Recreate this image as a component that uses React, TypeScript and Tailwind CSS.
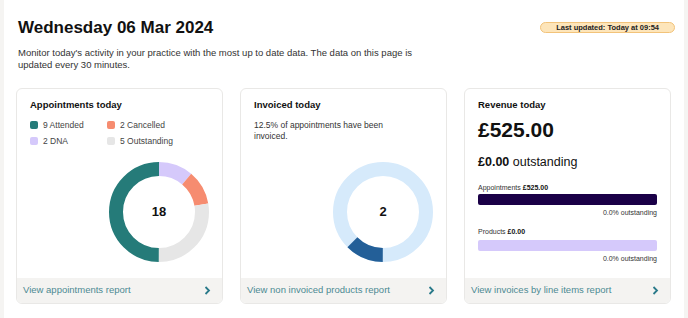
import React from 'react';

type Seg = { color: string; from: number; to: number };

// simple ring chart, angles in degrees clockwise from 12 o'clock
function Donut({ segs, label }: { segs: Seg[]; label: string }) {
  const r = 43;
  const c = 2 * Math.PI * r;
  return (
    <div className="relative w-[100px] h-[100px]">
      <svg width="100" height="100" viewBox="0 0 100 100" className="-rotate-90">
        {segs.map((s, i) => {
          const len = ((s.to - s.from) / 360) * c;
          return (
            <circle
              key={i}
              cx="50"
              cy="50"
              r={r}
              fill="none"
              stroke={s.color}
              strokeWidth="14"
              strokeDasharray={`${len} ${c - len}`}
              strokeDashoffset={-(s.from / 360) * c}
            />
          );
        })}
      </svg>
      <div className="absolute inset-0 flex items-center justify-center text-[13px] font-bold text-[#111]">{label}</div>
    </div>
  );
}

function Footer({ text }: { text: string }) {
  return (
    <div className="h-[25px] bg-[#f4f3f1] flex items-center justify-between pl-[6px] pr-[11px] text-[9.5px] text-[#4d8a93]">
      <span>{text}</span>
      <svg width="7" height="9" viewBox="0 0 7 9" fill="none">
        <path d="M1.5 1l3.5 3.5L1.5 8" stroke="#2a7a8a" strokeWidth="1.8" />
      </svg>
    </div>
  );
}

function Legend({ color, text }: { color: string; text: string }) {
  return (
    <div className="flex items-center h-[16px]">
      <span className="w-[8px] h-[8px] rounded-[2px] mr-[5px]" style={{ background: color }} />
      <span>{text}</span>
    </div>
  );
}

export default function App() {
  return (
    <div className="min-h-[318px] bg-[#f5f4f2] px-[4px] font-['Liberation_Sans',Arial,sans-serif]">
      <div className="bg-white min-h-[318px] px-[12px] pt-[18px]">
        <div className="flex items-start justify-between pl-[2px]">
          <h1 className="text-[17px] leading-[20px] font-bold text-[#111]">Wednesday 06 Mar 2024</h1>
          <div className="mt-[4px] -mr-[3px] h-[11px] px-[15px] rounded-full bg-[#fde5ba] border border-[#f2c37a] flex items-center text-[7.5px] font-bold text-[#222]">
            Last updated: Today at 09:54
          </div>
        </div>
        <p className="mt-[9px] pl-[2px] max-w-[415px] text-[9.5px] leading-[12px] text-[#333]">
          Monitor today's activity in your practice with the most up to date data. The data on this page is updated every 30 minutes.
        </p>

        <div className="mt-[17px] grid grid-cols-[207px_207px_207px] gap-[17px]">
          {/* appointments */}
          <div className="rounded-[6px] border border-[#e9e8e6] overflow-hidden">
            <div className="h-[189px] px-[13px] pt-[10px] pb-[16px] flex flex-col">
              <div className="text-[9.5px] leading-[12px] font-bold text-[#111]">Appointments today</div>
              <div className="mt-[6px] grid grid-cols-[77px_1fr] text-[8.5px] text-[#444]">
                <Legend color="#257b79" text="9 Attended" />
                <Legend color="#f68c70" text="2 Cancelled" />
                <Legend color="#d5c9fb" text="2 DNA" />
                <Legend color="#e6e6e6" text="5 Outstanding" />
              </div>
              <div className="mt-auto flex justify-end">
                <Donut
                  label="18"
                  segs={[
                    { color: '#d5c9fb', from: 0, to: 40 },
                    { color: '#f68c70', from: 40, to: 80 },
                    { color: '#e6e6e6', from: 80, to: 180 },
                    { color: '#257b79', from: 180, to: 360 },
                  ]}
                />
              </div>
            </div>
            <Footer text="View appointments report" />
          </div>

          {/* invoiced */}
          <div className="rounded-[6px] border border-[#e9e8e6] overflow-hidden">
            <div className="h-[189px] px-[13px] pt-[10px] pb-[16px] flex flex-col">
              <div className="text-[9.5px] leading-[12px] font-bold text-[#111]">Invoiced today</div>
              <p className="mt-[9px] max-w-[145px] text-[8.5px] leading-[11px] text-[#333]">
                12.5% of appointments have been invoiced.
              </p>
              <div className="mt-auto flex justify-end">
                <Donut
                  label="2"
                  segs={[
                    { color: '#d6eafb', from: 0, to: 360 },
                    { color: '#235f98', from: 180, to: 225 },
                  ]}
                />
              </div>
            </div>
            <Footer text="View non invoiced products report" />
          </div>

          {/* revenue */}
          <div className="rounded-[6px] border border-[#e9e8e6] overflow-hidden">
            <div className="h-[189px] px-[13px] pt-[10px] flex flex-col text-[#111]">
              <div className="text-[9.5px] leading-[12px] font-bold">Revenue today</div>
              <div className="mt-[7px] text-[21px] leading-[24px] font-bold">£525.00</div>
              <div className="mt-[13px] text-[12.5px] leading-[15px]">
                <b>£0.00</b> outstanding
              </div>
              <div className="mt-[13px] text-[7px] leading-[9px] text-[#333]">
                Appointments <b className="text-[#111]">£525.00</b>
              </div>
              <div className="mt-[2px] h-[11px] rounded-[2px] bg-[#1a0047]" />
              <div className="mt-[3px] text-right text-[7px] leading-[9px] text-[#333]">0.0% outstanding</div>
              <div className="mt-[10px] text-[7px] leading-[9px] text-[#333]">
                Products <b className="text-[#111]">£0.00</b>
              </div>
              <div className="mt-[4px] h-[11px] rounded-[2px] bg-[#d5c9fb]" />
              <div className="mt-[3px] text-right text-[7px] leading-[9px] text-[#333]">0.0% outstanding</div>
            </div>
            <Footer text="View invoices by line items report" />
          </div>
        </div>
      </div>
    </div>
  );
}
